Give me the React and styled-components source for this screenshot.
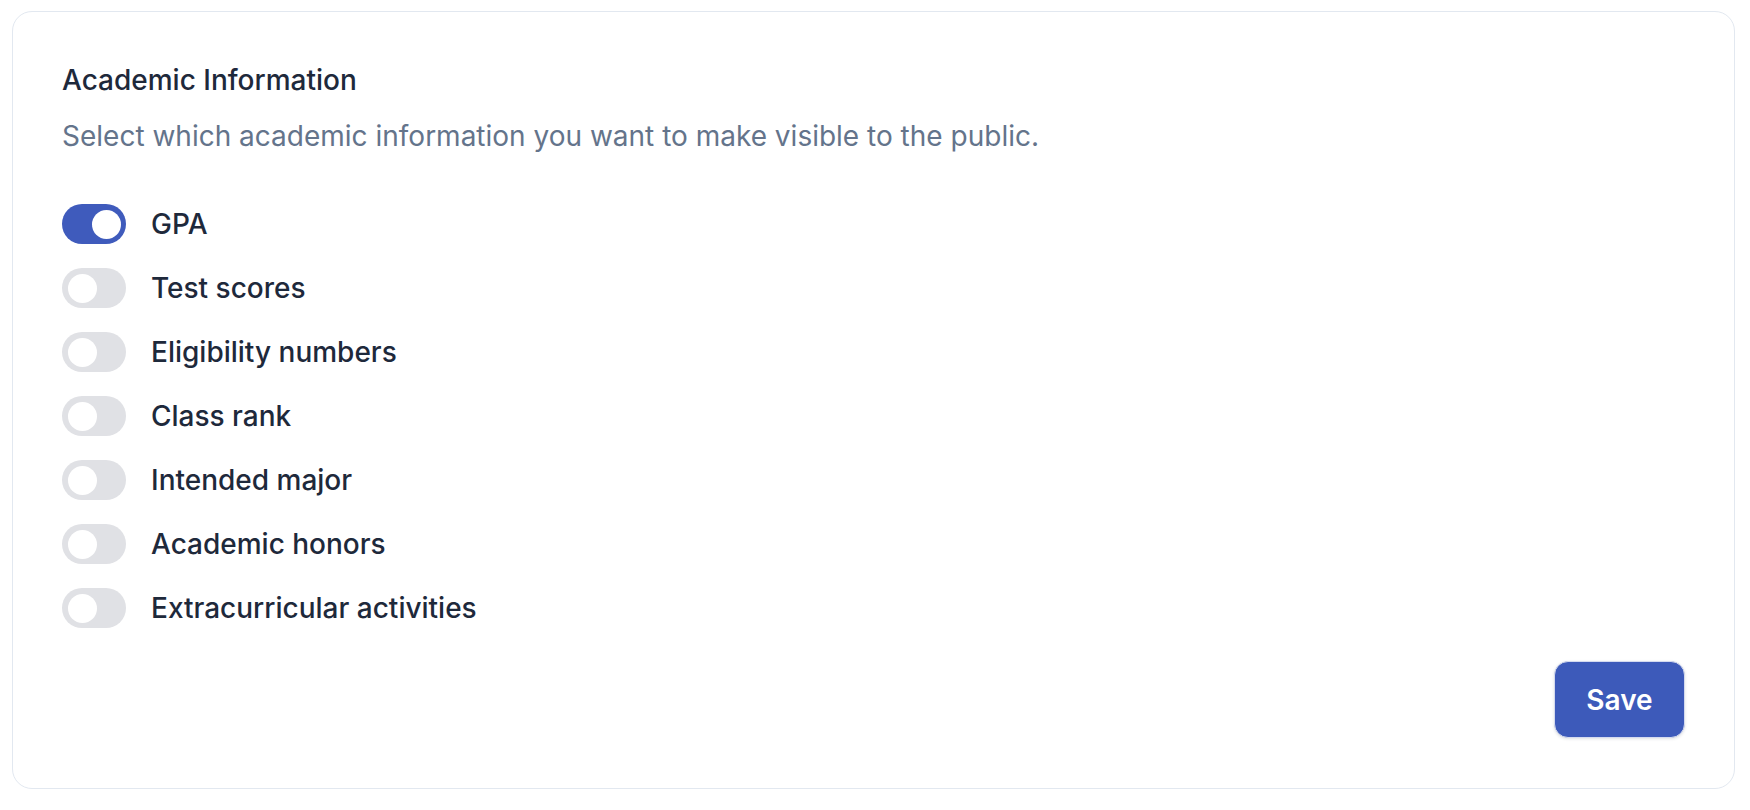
import React, { useState } from "react";
import styled, { createGlobalStyle } from "styled-components";

const GlobalStyle = createGlobalStyle`
  * { box-sizing: border-box; }
  html, body { margin: 0; padding: 0; background: #ffffff; }
  body { font-family: Inter, "Noto Sans", sans-serif; -webkit-font-smoothing: antialiased; }
`;

const Page = styled.div`
  padding: 11px 15px 0 12px;
`;

const Card = styled.section`
  border: 1px solid #e2e8f0;
  border-radius: 20px;
  background: #ffffff;
  padding: 49px 49px 50px;
  display: flex;
  flex-direction: column;
`;

const Title = styled.h2`
  margin: 0;
  font-size: 28px;
  line-height: 38px;
  font-weight: 500;
  color: #1e293b;
`;

const Description = styled.p`
  margin: 18px 0 0;
  font-size: 28px;
  line-height: 38px;
  font-weight: 400;
  color: #64748b;
`;

const OptionList = styled.div`
  margin-top: 49px;
  display: flex;
  flex-direction: column;
  gap: 24px;
`;

const Row = styled.label`
  display: flex;
  align-items: center;
  gap: 25px;
  height: 40px;
  cursor: pointer;
`;

const Track = styled.button`
  position: relative;
  width: 64px;
  height: 40px;
  flex: none;
  border: none;
  padding: 0;
  border-radius: 999px;
  background: ${(p) => (p.$on ? "#3f5bbc" : "#e0e1e5")};
  cursor: pointer;
`;

const Knob = styled.span`
  position: absolute;
  top: 5.5px;
  left: ${(p) => (p.$on ? "29.5px" : "6px")};
  width: 29px;
  height: 29px;
  border-radius: 50%;
  background: #ffffff;
`;

const Label = styled.span`
  font-size: 28px;
  line-height: 40px;
  font-weight: 500;
  color: #1e293b;
`;

const Footer = styled.div`
  margin-top: 33px;
  display: flex;
  justify-content: flex-end;
`;

const SaveButton = styled.button`
  width: 131px;
  height: 77px;
  border-radius: 14px;
  border: 1px solid #d4daef;
  background: #3d5aba;
  color: #ffffff;
  font-family: Inter, "Noto Sans", sans-serif;
  font-size: 28px;
  font-weight: 600;
  box-shadow: 0 1px 3px rgba(30, 41, 59, 0.14);
  cursor: pointer;
`;

const OPTIONS = [
  "GPA",
  "Test scores",
  "Eligibility numbers",
  "Class rank",
  "Intended major",
  "Academic honors",
  "Extracurricular activities",
];

export default function App() {
  const [on, setOn] = useState({ GPA: true });
  return (
    <>
      <GlobalStyle />
      <Page>
        <Card>
          <Title>Academic Information</Title>
          <Description>
            Select which academic information you want to make visible to the public.
          </Description>
          <OptionList>
            {OPTIONS.map((o) => (
              <Row key={o}>
                <Track
                  type="button"
                  role="switch"
                  aria-checked={!!on[o]}
                  $on={!!on[o]}
                  onClick={() => setOn((s) => ({ ...s, [o]: !s[o] }))}
                >
                  <Knob $on={!!on[o]} />
                </Track>
                <Label>{o}</Label>
              </Row>
            ))}
          </OptionList>
          <Footer>
            <SaveButton type="button">Save</SaveButton>
          </Footer>
        </Card>
      </Page>
    </>
  );
}
